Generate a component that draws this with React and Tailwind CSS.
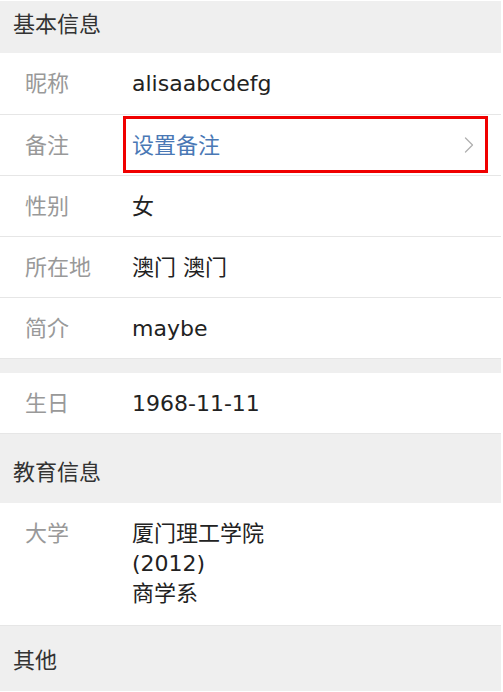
import { ChevronRight } from "lucide-react"

const font = { fontFamily: '"DejaVu Sans", "Noto Sans CJK SC", sans-serif' }

const Header = ({ title, className }) => (
    <div className={`bg-[#efefef] pl-[13px] text-[22px] leading-[30px] text-[#333] ${className}`}>
        {title}
    </div>
)

const Row = ({ label, children, className = "h-[61px]" }) => (
    <div className={`flex items-center border-b border-[#e6e6e6] bg-white ${className}`}>
        <div className="w-[132px] shrink-0 pl-[25px] text-[22px] text-[#999]">{label}</div>
        <div className="flex-1 text-[22px] text-[#222]">{children}</div>
    </div>
)

const App = () => {
    return (
        <div className="min-h-screen w-[503px] bg-white pr-[2px]" style={font}>
            <Header title="基本信息" className="h-[53px] border-t border-white pt-[9px]" />
            <Row label="昵称" className="h-[62px]">alisaabcdefg</Row>
            <div className="relative">
                <Row label="备注">
                    <div className="flex items-center justify-between pr-[18px]">
                        <span className="text-[#4a78b5]">设置备注</span>
                        <ChevronRight size={28} strokeWidth={1.1} className="text-[#b0b0b0]" />
                    </div>
                </Row>
                <div className="absolute left-[123px] top-[1px] h-[57px] w-[365px] border-[3px] border-[#f00000]" />
            </div>
            <Row label="性别">女</Row>
            <Row label="所在地">澳门 澳门</Row>
            <Row label="简介">maybe</Row>
            <div className="h-[14px] bg-[#efefef]" />
            <Row label="生日">1968-11-11</Row>
            <Header title="教育信息" className="h-[69px] pt-[24px]" />
            <div className="flex border-b border-[#e6e6e6] bg-white pb-[16px] pt-[16px] text-[22px] leading-[30px]">
                <div className="w-[132px] shrink-0 pl-[25px] text-[#999]">大学</div>
                <div className="text-[#222]">
                    <div>厦门理工学院</div>
                    <div>(2012)</div>
                    <div>商学系</div>
                </div>
            </div>
            <Header title="其他" className="h-[65px] pt-[20px]" />
        </div>
    )
}

export default App
